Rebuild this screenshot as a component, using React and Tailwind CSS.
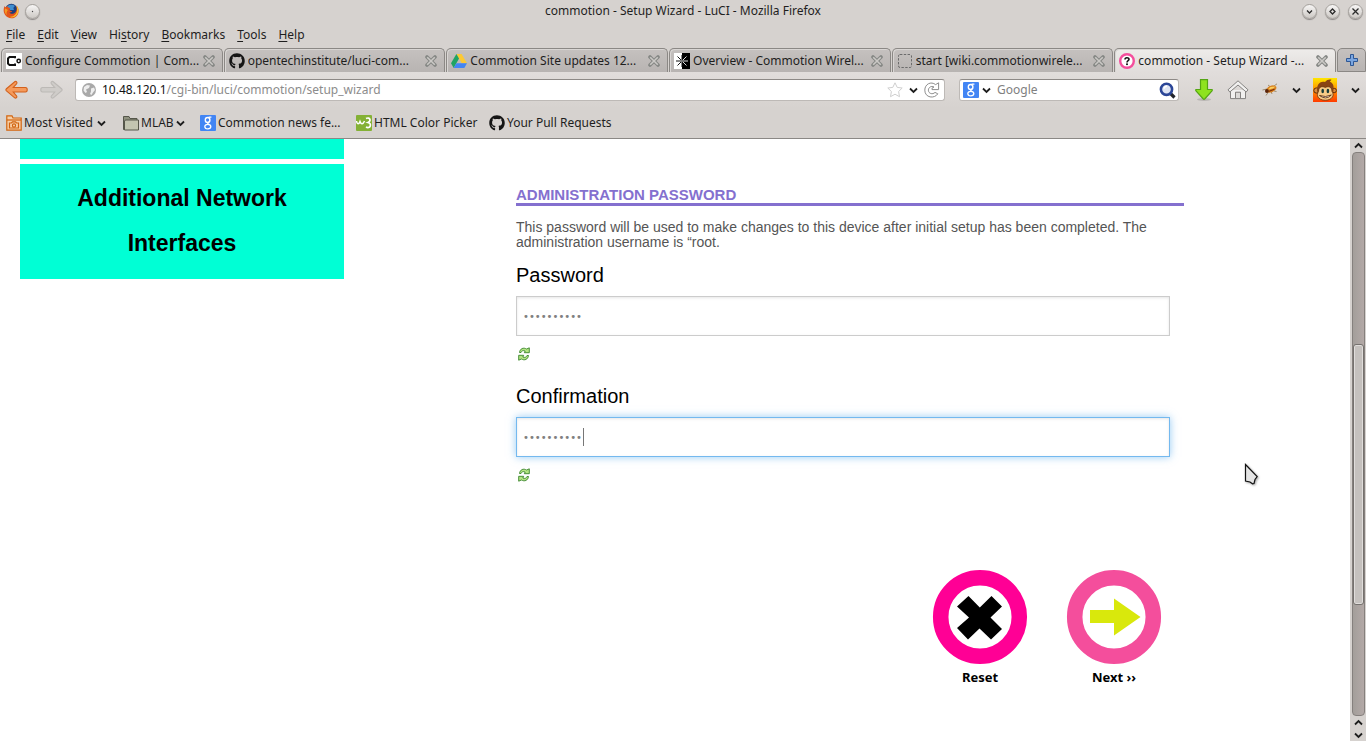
import React from "react";
import { FaGithub } from "react-icons/fa";

const chevron = "M1 1.5 L4.5 5 L8 1.5";

function Chevron({ up = false, className = "" }) {
  return (
    <svg viewBox="0 0 9 7" className={"h-[7px] w-[9px] shrink-0 " + className} fill="none" stroke="#1e1e1e" strokeWidth="1.8">
      <path d={up ? "M1 5.5 L4.5 2 L8 5.5" : chevron} />
    </svg>
  );
}

function FirefoxIcon() {
  return (
    <svg viewBox="0 0 16 16" className="h-4 w-4 shrink-0">
      <circle cx="8.3" cy="7.2" r="6.4" fill="#1d3f7c" />
      <path d="M4 3.6 C6 1.2 10 1 12 3 C10.5 3.8 10 5.5 11 7 L7 7 Z" fill="#3f8ed0" />
      <path d="M1.6 3 C.3 5.6 .2 9 2 11.8 C4 15 8.4 16.2 11.8 14.4 C15 12.7 16.2 9 15.3 5.8 C15 4.5 14.3 3.3 13.2 2.5 C14 4.8 13.8 7.6 12.2 9.4 C10.4 11.2 7.6 11 6.3 9.4 C7.6 9.5 8.8 9 9.2 8.2 C7.8 8.2 6.7 7.6 6.4 6.6 C6.9 6 7.2 5.5 7 5 C5.7 5 5 4.3 4.6 3.3 C3.7 3.5 3 4 2.7 4.5 C2.2 4.2 1.8 3.6 1.6 3Z" fill="#e2541b" />
      <path d="M13.2 2.5 C15.6 4.2 16.3 8.5 14.2 11.6 C12.3 14.3 9 15 6.5 14 C10 14 12.9 12 13.8 8.8 C14.4 6.6 14 4 13.2 2.5Z" fill="#fbc02d" />
      <path d="M2 5.2 C1.2 8 2 10.6 3.8 12.2 C3.2 10 3.6 8 5 7 Z" fill="#f59a23" />
    </svg>
  );
}

function RoundButton({ label, children }) {
  return (
    <button aria-label={label} className="flex h-[15px] w-[15px] items-center justify-center rounded-full border border-[#a5a19d] bg-linear-to-b from-[#f7f6f5] to-[#cdc9c5] shadow-[0_1px_1px_#8b8785]">
      <svg viewBox="0 0 9 9" className="h-[9px] w-[9px]" fill="none" stroke="#2b2b2b" strokeWidth="1.3">
        {children}
      </svg>
    </button>
  );
}

function CommotionIcon() {
  return (
    <svg viewBox="0 0 16 16" className="h-4 w-4 shrink-0">
      <rect width="16" height="16" fill="#fff" />
      <path d="M9 5.3 V4 H3.5 L2 5.5 V10.5 L3.5 12 H9 V10.6" fill="none" stroke="#111" strokeWidth="2" />
      <circle cx="12.7" cy="8" r="1.7" fill="none" stroke="#111" strokeWidth="1.5" />
    </svg>
  );
}

function DriveIcon() {
  return (
    <svg viewBox="0 0 16 16" className="h-4 w-4 shrink-0">
      <path d="M5.4 1 H10.6 L16 10.3 H10.8 Z" fill="#fcc934" />
      <path d="M5.4 1 L8 5.5 L2.7 15 L0 10.3 Z" fill="#1fa463" />
      <path d="M5.4 10.3 H16 L13.3 15 H2.7 Z" fill="#4285f4" />
    </svg>
  );
}

function OverviewIcon() {
  return (
    <svg viewBox="0 0 16 16" className="h-4 w-4 shrink-0">
      <rect width="8" height="16" fill="#fff" />
      <rect x="8" width="8" height="16" fill="#000" />
      <path d="M8 2 V14 M8 8 H2 M8 8 L3.5 3.5 M8 8 L3.5 12.5" stroke="#111" strokeWidth="1" />
      <path d="M8 8 H14 M8 8 L12.5 3.5 M8 8 L12.5 12.5" stroke="#ddd" strokeWidth="1" />
      <circle cx="8" cy="8" r="1.3" fill="#777" />
    </svg>
  );
}

function BlankIcon() {
  return (
    <svg viewBox="0 0 16 16" className="h-4 w-4 shrink-0">
      <rect x="1.5" y="1.5" width="13" height="13" rx="1.5" fill="none" stroke="#6b6b6b" strokeDasharray="2.4 1.4" />
    </svg>
  );
}

function HelpIcon() {
  return (
    <svg viewBox="0 0 16 16" className="h-4 w-4 shrink-0">
      <circle cx="8" cy="8" r="6.8" fill="#fff" stroke="#f44e9c" strokeWidth="2.4" />
      <path d="M6 6.4 C6 4.2 10 4.2 10 6.3 C10 7.7 8 7.6 8 9.4" fill="none" stroke="#111" strokeWidth="1.6" />
      <rect x="7.1" y="10.4" width="1.8" height="1.7" fill="#111" />
    </svg>
  );
}

function GoogleIcon() {
  return (
    <svg viewBox="0 0 16 16" className="h-4 w-4 shrink-0">
      <rect width="16" height="16" rx="1" fill="#4285f4" />
      <ellipse cx="7.6" cy="5" rx="2.3" ry="2.5" fill="none" stroke="#fff" strokeWidth="1.4" />
      <path d="M8.6 2.2 H11.4 M9 7 C7 8 7.4 8.6 9 9.4" fill="none" stroke="#fff" strokeWidth="1.3" />
      <ellipse cx="7.8" cy="11.6" rx="3" ry="2.3" fill="none" stroke="#fff" strokeWidth="1.3" />
    </svg>
  );
}

function CloseIcon() {
  return (
    <svg viewBox="0 0 12 12" className="h-3 w-3" fill="none">
      <path d="M2 2 L10 10 M10 2 L2 10" stroke="#858784" strokeWidth="3.6" strokeLinecap="round" />
      <path d="M2.2 2.2 L9.8 9.8 M9.8 2.2 L2.2 9.8" stroke="#cbc9c6" strokeWidth="1.6" />
    </svg>
  );
}

const tabs = [
  { title: "Configure Commotion | Com...", icon: <CommotionIcon /> },
  { title: "opentechinstitute/luci-com...", icon: <FaGithub className="h-4 w-4 shrink-0 text-[#151515]" /> },
  { title: "Commotion Site updates 12...", icon: <DriveIcon /> },
  { title: "Overview - Commotion Wirel...", icon: <OverviewIcon /> },
  { title: "start [wiki.commotionwirele...", icon: <BlankIcon /> },
  { title: "commotion - Setup Wizard -...", icon: <HelpIcon />, active: true },
];

const menus = [
  ["", "F", "ile"],
  ["", "E", "dit"],
  ["", "V", "iew"],
  ["Hi", "s", "tory"],
  ["", "B", "ookmarks"],
  ["", "T", "ools"],
  ["", "H", "elp"],
];

function TitleBar() {
  return (
    <div className="flex h-[22px] items-center justify-between px-[3px]">
      <div className="flex w-20 items-center gap-[6px]">
        <FirefoxIcon />
        <RoundButton label="Window on all desktops">
          <circle cx="4.5" cy="4.5" r="0.7" fill="#444" stroke="none" />
        </RoundButton>
      </div>
      <div>commotion - Setup Wizard - LuCI - Mozilla Firefox</div>
      <div className="flex w-20 items-center justify-end gap-2">
        <RoundButton label="Minimize"><path d="M2 3.5 L4.5 6 L7 3.5" /></RoundButton>
        <RoundButton label="Maximize"><path d="M4.5 2 L7 4.5 L4.5 7 L2 4.5 Z" /></RoundButton>
        <RoundButton label="Close"><path d="M1.5 1.5 L7.5 7.5 M7.5 1.5 L1.5 7.5" /></RoundButton>
      </div>
    </div>
  );
}

function MenuBar() {
  return (
    <nav className="flex h-[26px] items-center gap-3 px-[6px]">
      {menus.map(([a, b, c]) => (
        <button key={b + c}>
          {a}<span className="underline underline-offset-2">{b}</span>{c}
        </button>
      ))}
    </nav>
  );
}

function TabBar() {
  return (
    <div className="flex h-6 gap-px pl-px">
      {tabs.map((t) => (
        <div
          key={t.title}
          className={
            "flex min-w-0 flex-1 items-center rounded-t-[5px] border border-b-0 border-[#8b8885] pr-[7px] pl-1 shadow-[inset_1px_1px_0_#d9d6d4] " +
            (t.active ? "bg-linear-to-b from-[#eeecea] to-[#e1dddb]" : "bg-linear-to-b from-[#c5c1bf] to-[#b8b4b2]")
          }
        >
          <button className="flex min-w-0 flex-1 items-center gap-[3px] text-left">
            {t.icon}
            <span className="overflow-hidden whitespace-nowrap">{t.title}</span>
          </button>
          <button aria-label="Close tab" className="ml-1"><CloseIcon /></button>
        </div>
      ))}
      <button aria-label="New tab" className="flex w-[29px] items-center justify-center rounded-t-[5px] border border-[#8b8885] bg-linear-to-b from-[#c5c1bf] to-[#b8b4b2]">
        <svg viewBox="0 0 12 12" className="h-3 w-3">
          <path d="M4.5 .5 H7.5 V4.5 H11.5 V7.5 H7.5 V11.5 H4.5 V7.5 H.5 V4.5 H4.5 Z" fill="#7ba6e0" stroke="#2d5795" />
        </svg>
      </button>
    </div>
  );
}

function NavBar() {
  return (
    <div className="flex h-9 items-center bg-linear-to-b from-[#e1dddb] to-[#d6d2cf] pr-[6px] pl-[5px]">
      <button aria-label="Back">
        <svg viewBox="0 0 24 20" className="h-5 w-6">
          <path d="M10 1.5 C11.5 1 12.5 2.5 11.5 3.8 L8.3 7.5 H20.5 C22.8 7.5 22.8 12 20.5 12 H8.3 L11.5 15.8 C12.5 17.2 11 18.6 9.7 17.8 L1.2 10.6 Q.6 9.8 1.2 9 Z" fill="#f59a5b" stroke="#d2611c" strokeWidth="1.1" />
        </svg>
      </button>
      <button aria-label="Forward" className="ml-[10px]">
        <svg viewBox="0 0 24 20" className="h-5 w-6">
          <path d="M14 1.5 C12.5 1 11.5 2.5 12.5 3.8 L15.7 7.5 H3.5 C1.2 7.5 1.2 12 3.5 12 H15.7 L12.5 15.8 C11.5 17.2 13 18.6 14.3 17.8 L22.8 10.6 Q23.4 9.8 22.8 9 Z" fill="#cfccc9" stroke="#bcb9b6" strokeWidth="1.1" />
        </svg>
      </button>
      <div className="ml-3 flex h-[22px] flex-1 items-center rounded-[3px] border border-[#bdb9b6] border-t-[#8d8986] bg-white pr-1 pl-[6px]">
        <svg viewBox="0 0 14 14" className="h-[14px] w-[14px] shrink-0">
          <circle cx="7" cy="7" r="7" fill="#a9a9a9" />
          <path d="M2 4 L5 2 L8 2.5 L7 5 L4 6.5 L5 9 L3.5 10 L1.5 7.5 Z M9 5.5 L12 4.5 L13 7 L11 9.5 L9.5 12 L8 11 L9 8.5 Z" fill="#eee" />
        </svg>
        <div className="relative ml-[6px] flex-1">
          <div className="pointer-events-none absolute inset-0 whitespace-nowrap text-[#8c8c8c]" aria-hidden="true">
            <span className="text-[#111]">10.48.120.1</span>/cgi-bin/luci/commotion/setup_wizard
          </div>
          <input aria-label="Address" defaultValue="10.48.120.1/cgi-bin/luci/commotion/setup_wizard" className="block w-full bg-transparent text-transparent outline-none" />
        </div>
        <button aria-label="Bookmark this page">
          <svg viewBox="0 0 16 16" className="h-4 w-4" fill="#fff" stroke="#cfcfcf" strokeLinejoin="round">
            <path d="M8 .8 L10.2 5.4 L15.2 6 L11.6 9.5 L12.5 14.7 L8 12.2 L3.5 14.7 L4.4 9.5 L.8 6 L5.8 5.4 Z" />
          </svg>
        </button>
        <button aria-label="Address history" className="ml-[6px]"><Chevron /></button>
        <button aria-label="Reload" className="ml-[6px]">
          <svg viewBox="0 0 16 16" className="h-4 w-4" fill="none" stroke="#8d8d8d" strokeLinejoin="round">
            <path d="M11.6 2.6 L14.6 .8 V7.6 H8 V6.2 L10 5 C7.5 3.6 4.4 5.2 4.4 8.2 C4.4 11.6 8.6 12.9 11 10.4 L13.8 11.8 C10.6 17 .8 16 .8 8.2 C.8 2 7 -1 11.6 2.6 Z" fill="#fff" />
          </svg>
        </button>
      </div>
      <div className="ml-[14px] flex h-[22px] w-[220px] items-center rounded-[3px] border border-[#bdb9b6] border-t-[#8d8986] bg-white pr-[2px] pl-[3px]">
        <button aria-label="Search engine" className="flex items-center gap-[3px]">
          <GoogleIcon />
          <Chevron />
        </button>
        <input aria-label="Search" placeholder="Google" className="ml-[6px] min-w-0 flex-1 outline-none placeholder:text-[#808080]" />
        <button aria-label="Run search">
          <svg viewBox="0 0 17 17" className="h-[17px] w-[17px]" fill="none">
            <path d="M11.5 11.5 L15.5 15.5" stroke="#23252b" strokeWidth="3.2" />
            <circle cx="7.5" cy="7.3" r="5.6" fill="#dfe5f3" stroke="#2b4697" strokeWidth="2.6" />
            <path d="M5 6.6 A3 3 0 0 1 8 4.3" stroke="#fff" strokeWidth="1.4" />
          </svg>
        </button>
      </div>
      <button aria-label="Downloads" className="ml-4">
        <svg viewBox="0 0 18 22" className="h-[22px] w-[18px]">
          <ellipse cx="9" cy="20.5" rx="7" ry="1.5" fill="#b9b6b3" />
          <path d="M5.5 .7 H12.5 V10.5 H17 Q17.6 11 17 12 L9.7 20 Q9 20.6 8.3 20 L1 12 Q.4 11 1 10.5 H5.5 Z" fill="#8ee21f" stroke="#55a514" strokeWidth="1.2" />
        </svg>
      </button>
      <button aria-label="Home" className="ml-[14px]">
        <svg viewBox="0 0 22 20" className="h-5 w-[22px]" fill="#f1f0ef" stroke="#848280" strokeLinejoin="round">
          <path d="M3.5 10 V18.6 H8.5 V12.5 H13.5 V18.6 H18.5 V10" />
          <path d="M8.5 18.6 V12.2 H13.5 V18.6 Z" fill="#dcdad8" />
          <path d="M11 .8 L21 9.8 L19.2 12 L11 5 L2.8 12 L1 9.8 Z" />
        </svg>
      </button>
      <button aria-label="Firebug" className="ml-[13px]">
        <svg viewBox="0 0 16 14" className="h-[14px] w-4">
          <path d="M.5 7 L5 6 M4 12.5 L7 8 M12 3 L15 .8 M12 8 L14.5 8.5 M8 3.5 L6 2 M9 8 L10 11" stroke="#8d7a57" strokeWidth=".8" />
          <ellipse cx="9.3" cy="6" rx="5.4" ry="3.2" transform="rotate(-24 9.3 6)" fill="#d98220" />
          <path d="M6 6.5 L8.5 4 L13.5 3.5 L11 5.5 Z" fill="#fbd05f" />
          <path d="M6.5 8.5 L12.5 6.3" stroke="#7d2f0b" strokeWidth="1.2" />
          <circle cx="4.9" cy="8" r="1.9" fill="#5a240a" />
        </svg>
      </button>
      <button aria-label="Firebug menu" className="ml-[14px]"><Chevron /></button>
      <button aria-label="Greasemonkey" className="ml-3">
        <svg viewBox="0 0 24 24" className="h-6 w-6">
          <defs>
            <linearGradient id="fire" x1="0" y1="0" x2="0" y2="1">
              <stop offset="0" stopColor="#ffe600" />
              <stop offset="1" stopColor="#ff3b00" />
            </linearGradient>
          </defs>
          <rect width="24" height="24" fill="url(#fire)" />
          <circle cx="3.4" cy="12.5" r="2.6" fill="#d98b3d" stroke="#5e2b08" />
          <circle cx="21.2" cy="12.5" r="2.2" fill="#d98b3d" stroke="#5e2b08" />
          <path d="M4.5 15 C2.5 7 7 2.5 12 4 C14 1.2 17 1 18.5 1.8 L16.8 3.8 C20.5 5 21.5 9 20 15 Z" fill="#8a4513" />
          <path d="M5.5 13.5 C5.5 8.5 9.3 7.8 12.3 9.5 C15.5 7.8 19 8.8 19 13.5 C21.5 16.5 20 22 12.3 22.3 C4.5 22 3 17 5.5 13.5Z" fill="#f6cb87" stroke="#6b330b" strokeWidth=".8" />
          <ellipse cx="9.7" cy="13" rx="1.3" ry="2.3" fill="#153b38" />
          <ellipse cx="14.9" cy="13" rx="1.3" ry="2.3" fill="#153b38" />
          <path d="M6.5 17.5 Q12.5 19.8 18.3 17 Q13 22.5 6.5 17.5Z" fill="#fff" stroke="#4b2208" strokeWidth=".8" />
        </svg>
      </button>
      <button aria-label="Greasemonkey menu" className="ml-[14px]"><Chevron /></button>
    </div>
  );
}

function FolderIcon({ orange = false }) {
  return orange ? (
    <svg viewBox="0 0 16 16" className="h-4 w-4 shrink-0" fill="none" stroke="#d2640f" strokeWidth="1.2">
      <path d="M.8 15.2 V.8 H6 L7 3 H15.2 V15.2 Z" fill="#f6cfa6" />
      <path d="M1 5 H15" />
      <path d="M3.5 8 H5.5 L6.5 6.8 H9.5 L10.5 8 H12.5 V13 H3.5 Z" />
      <circle cx="8" cy="10.5" r="1.6" />
    </svg>
  ) : (
    <svg viewBox="0 0 16 16" className="h-4 w-4 shrink-0" stroke="#55564a">
      <path d="M.5 14.5 V1.5 H6 L7 3.5 H14 V14.5 Z" fill="#8f917f" />
      <path d="M1.5 15 V6 Q1.5 5 3 5 H15.5 V15 Z" fill="#c3c5b1" />
    </svg>
  );
}

function BookmarksBar() {
  return (
    <div className="flex h-[30px] items-center px-[6px]">
      <button className="flex w-[117px] items-center gap-[2px]"><FolderIcon orange />Most Visited<Chevron className="ml-[2px]" /></button>
      <button className="flex w-[77px] items-center gap-[2px]"><FolderIcon />MLAB<Chevron /></button>
      <a href="#news" className="flex w-[156px] items-center gap-[2px] whitespace-nowrap"><GoogleIcon />Commotion news fe...</a>
      <a href="#picker" className="flex w-[133px] items-center gap-[2px] whitespace-nowrap">
        <svg viewBox="0 0 16 16" className="h-4 w-4 shrink-0">
          <rect width="16" height="16" rx="1" fill="#84b135" />
          <path d="M.5 6 C1 9.5 3 9.5 4 6.5 C5 9.5 7 9.5 8.5 6" fill="none" stroke="#fff" strokeWidth="1.5" />
          <path d="M10 3.5 C14 1.5 15.5 6 12 7.5 C16.5 8.5 14 14.5 10 12" fill="none" stroke="#fff" strokeWidth="1.7" />
        </svg>
        HTML Color Picker
      </a>
      <a href="#pulls" className="flex items-center gap-[2px] whitespace-nowrap"><FaGithub className="h-4 w-4 shrink-0 text-[#151515]" />Your Pull Requests</a>
    </div>
  );
}

function RefreshIcon() {
  return (
    <svg viewBox="0 0 12 14" className="h-[14px] w-3">
      <path d="M1.5 5.5 C2 1.5 5.5 .2 8.6 2 L11.3 .8 V5.7 H6.3 L7.2 4 C5 3 3.6 4 3 5.5 Z" fill="#b4e583" stroke="#39852a" strokeWidth=".9" />
      <path d="M10.5 8.5 C10 12.5 6.5 13.8 3.4 12 L.7 13.2 V8.3 H5.7 L4.8 10 C7 11 8.4 10 9 8.5 Z" fill="#b4e583" stroke="#39852a" strokeWidth=".9" />
    </svg>
  );
}

function PasswordField({ id, label, focused = false }) {
  return (
    <div className="mr-[14px] h-[121px]">
      <label htmlFor={id} className="block text-[20px] leading-6 text-black">{label}</label>
      <div className="relative mt-[9px]">
        <input
          id={id}
          type="password"
          defaultValue="commotion1"
          className={
            "block h-10 w-full border px-[6px] font-['DejaVu_Sans',sans-serif] text-[10px] text-[#808080] outline-none " +
            (focused
              ? "border-[#74b9ef] shadow-[inset_0_1px_3px_rgba(0,0,0,0.1),0_0_8px_rgba(82,168,236,0.6)]"
              : "border-[#ccc] shadow-[inset_0_1px_3px_rgba(0,0,0,0.1)]")
          }
        />
        {focused && <span className="absolute top-[11px] left-[67px] h-[18px] w-px bg-[#777]" />}
      </div>
      <button aria-label={"Reveal " + label} className="mt-[11px] ml-[2px] block"><RefreshIcon /></button>
    </div>
  );
}

function WizardButton({ label, ring, children }) {
  return (
    <button className="flex flex-col items-center font-['Noto_Sans',sans-serif] text-[13px] leading-4 font-bold text-black">
      <svg viewBox="0 0 96 96" className="h-24 w-24">
        <circle cx="48" cy="48" r="39.3" fill="#fff" stroke={ring} strokeWidth="15.5" />
        {children}
      </svg>
      <span className="mt-1">{label}</span>
    </button>
  );
}

function Page() {
  return (
    <div className="flex min-w-0 flex-1 items-start bg-white pl-5 font-['Liberation_Sans',Arial,sans-serif]">
      <aside className="w-[324px] shrink-0">
        <div className="h-5 bg-[#00ffd5]" />
        <a href="#interfaces" className="mt-[5px] block bg-[#00ffd5] px-10 pt-3 pb-[13px] text-center text-[23px] leading-[45px] font-bold text-black">
          Additional Network Interfaces
        </a>
      </aside>
      <main className="mr-[166px] ml-[172px] min-w-0 flex-1 pt-12">
        <h2 className="border-b-[3px] border-[#8470cf] text-[15px] leading-4 font-bold text-[#8470cf]">ADMINISTRATION PASSWORD</h2>
        <p className="mt-[14px] mb-[13px] text-[14px] leading-[15px] text-[#555]">
          This password will be used to make changes to this device after initial setup has been completed. The administration username is “root.
        </p>
        <PasswordField id="password" label="Password" />
        <PasswordField id="confirmation" label="Confirmation" focused />
        <div className="mt-16 mr-[22px] flex justify-end gap-[38px]">
          <WizardButton label="Reset" ring="#ff0095">
            <path d="M25 37.5 L36.5 27 L47.8 38.5 L59.5 27 L70 37.5 L58.5 48.5 L70 60 L59 70.5 L47.5 59.5 L36 70.5 L25 59 L37 48.5 Z" fill="#000" />
          </WizardButton>
          <WizardButton label="Next ››" ring="#f44e9c">
            <path d="M24 41 H48 V29.5 L74.5 48 L48 66.5 V54 H24 Z" fill="#d9e80c" />
          </WizardButton>
        </div>
      </main>
    </div>
  );
}

function Scrollbar() {
  return (
    <div className="flex w-4 shrink-0 flex-col items-center bg-[#d6d2cf]">
      <button aria-label="Scroll up" className="flex h-[13px] items-center"><Chevron up /></button>
      <div className="flex w-[13px] flex-1 flex-col rounded-[4px] border border-[#85807d] bg-linear-to-r from-[#a39e9a] to-[#b3a9a7]">
        <div className="h-[34%]" />
        <div className="h-[46.5%] rounded-[3px] border border-[#75716e] bg-[#c5c1be] shadow-[inset_0_0_0_1px_#e0dddb]" />
      </div>
      <button aria-label="Page up" className="flex h-[13px] items-center"><Chevron up /></button>
      <button aria-label="Scroll down" className="flex h-3 items-center"><Chevron /></button>
    </div>
  );
}

export default function App() {
  return (
    <div className="relative flex min-h-screen flex-col bg-[#d6d2cf] font-['Noto_Sans',sans-serif] text-[12px] leading-4 text-[#1e1e1e]">
      <header className="border-b border-[#8b8885]">
        <TitleBar />
        <MenuBar />
        <TabBar />
        <NavBar />
        <BookmarksBar />
      </header>
      <div className="flex flex-1 items-stretch">
        <Page />
        <Scrollbar />
      </div>
      <svg viewBox="0 0 16 24" className="pointer-events-none absolute top-[463px] left-[1244px] h-6 w-4 drop-shadow-[1px_1px_1px_rgba(0,0,0,0.35)]">
        <path d="M1.5 1.5 L13.2 13.5 L11 16.5 L10 20.5 L8.5 20.8 L6 19 L1.5 18 Z" fill="#e4e4e4" stroke="#111" strokeWidth="1.2" />
      </svg>
    </div>
  );
}
